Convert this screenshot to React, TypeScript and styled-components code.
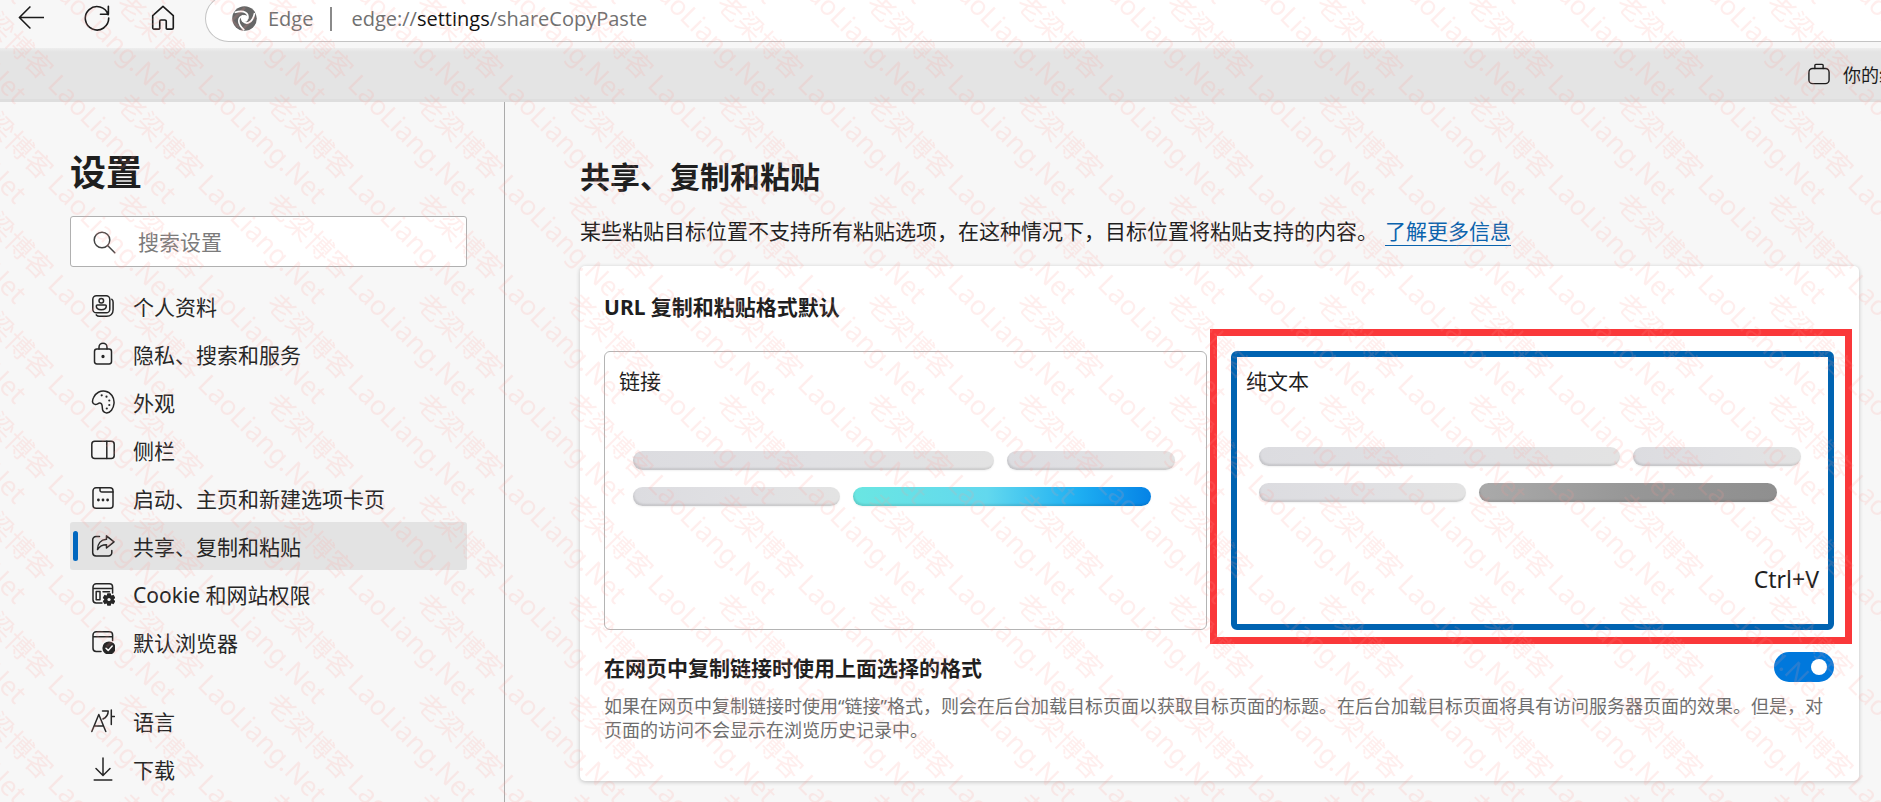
import React from "react";
import styled, { createGlobalStyle } from "styled-components";

const GlobalStyle = createGlobalStyle`
  *, *::before, *::after { box-sizing: border-box; }
  body {
    margin: 0;
    background: #f7f7f7;
    color: #1f1f1f;
    font-family: "Noto Sans", "Noto Sans CJK SC", sans-serif;
    font-size: 21px;
  }
  h1, h2, h3, p, ul { margin: 0; padding: 0; }
  ul { list-style: none; }
`;

const Page = styled.div`
  position: relative;
  min-height: 100vh;
  display: flex;
  flex-direction: column;
  overflow: hidden;
`;

const Toolbar = styled.header`
  display: flex;
  align-items: flex-start;
  height: 48px;
  padding-left: 12px;
`;

const ToolButton = styled.button`
  display: flex;
  align-items: center;
  justify-content: center;
  width: 38px;
  height: 36px;
  margin-right: 28px;
  padding: 0;
  border: 0;
  background: none;
  color: #1b1b1b;
`;

const AddressBar = styled.div`
  flex: 1;
  display: flex;
  align-items: center;
  height: 47px;
  margin-top: -5px;
  margin-left: -5px;
  padding-left: 26px;
  border: 1px solid #c4c4c4;
  border-right: 0;
  border-radius: 24px 0 0 24px;
  background: #fff;
  color: #707070;
  font-family: "Open Sans", "Noto Sans CJK SC", sans-serif;
  font-size: 20px;
`;

const SiteName = styled.span`
  margin-left: 11px;
  padding-right: 17px;
`;

const AddressDivider = styled.span`
  width: 2px;
  height: 24px;
  margin-right: 19px;
  background: #8a8a8a;
`;

const Address = styled.span`
  b { color: #111; font-weight: 400; }
`;

const Banner = styled.div`
  display: flex;
  align-items: center;
  justify-content: flex-end;
  height: 54px;
  border-bottom: 3px solid #dedede;
  background: linear-gradient(#eeeeee, #e4e4e4 4px);
  color: #1b1b1b;
`;

const BannerText = styled.span`
  width: 38px;
  margin-left: 13px;
  overflow: hidden;
  white-space: nowrap;
  font-size: 18px;
`;

const Body = styled.div`
  flex: 1;
  display: flex;
`;

const Sidebar = styled.aside`
  flex: none;
  width: 505px;
  padding: 47px 37px 0 70px;
  border-right: 1px solid #ababab;
`;

const SidebarTitle = styled.h1`
  font-size: 36px;
  line-height: 48px;
`;

const SearchBox = styled.label`
  display: flex;
  align-items: center;
  height: 51px;
  margin: 19px 0 15px;
  padding-left: 21px;
  border: 1px solid #b0b0b0;
  border-radius: 3px;
  background: #fff;
  color: #444;
`;

const SearchInput = styled.input`
  flex: 1;
  min-width: 0;
  margin-left: 22px;
  padding: 0;
  border: 0;
  outline: 0;
  background: none;
  font: inherit;
  &::placeholder { color: #7b7b7b; opacity: 1; }
`;

const NavList = styled.ul`
  margin-bottom: 31px;
`;

const NavLink = styled.a<{ $active?: boolean }>`
  position: relative;
  display: flex;
  align-items: center;
  gap: 18px;
  height: 48px;
  padding-left: 21px;
  border-radius: 3px;
  background: ${(p) => (p.$active ? "#e3e3e3" : "transparent")};
  color: #262626;
  text-decoration: none;

  &::before {
    content: "";
    position: absolute;
    left: 3px;
    top: 9px;
    display: ${(p) => (p.$active ? "block" : "none")};
    width: 5px;
    height: 30px;
    border-radius: 3px;
    background: #0067bf;
  }
`;

const Main = styled.main`
  flex: 1;
  min-width: 0;
  padding: 55px 22px 20px 75px;
`;

const PageTitle = styled.h2`
  font-size: 30px;
  line-height: 40px;
`;

const Intro = styled.p`
  margin: 20px 0 21px;
  line-height: 28px;
`;

const InfoLink = styled.a`
  margin-left: 7px;
  border-bottom: 1px solid #0b63ad;
  color: #0b63ad;
  text-decoration: none;
`;

const Card = styled.section`
  padding: 27px 25px 39px 24px;
  border-radius: 5px;
  background: #fff;
  box-shadow: 0 1px 4px rgba(0, 0, 0, 0.22);
`;

const CardTitle = styled.h3`
  font-size: 21px;
  line-height: 28px;
`;

const Options = styled.div`
  display: grid;
  grid-template-columns: 1fr 1fr;
  gap: 24px;
  margin: 30px 0 22px;
`;

const OptionSlot = styled.div`
  position: relative;
`;

const OptionCard = styled.label<{ $selected?: boolean }>`
  display: flex;
  flex-direction: column;
  height: 279px;
  padding: ${(p) => (p.$selected ? "10px 9px" : "15px 14px")};
  border: ${(p) => (p.$selected ? "6px solid #0063b1" : "1px solid #b4b4b4")};
  border-radius: 6px;
  line-height: 28px;
`;

const OptionRadio = styled.input`
  position: absolute;
  opacity: 0;
`;

const Highlight = styled.div`
  position: absolute;
  inset: -22px -18px -14px -21px;
  border: 7px solid #fa383a;
  pointer-events: none;
`;

const Preview = styled.div<{ $selected?: boolean }>`
  display: flex;
  flex-direction: column;
  gap: 17px;
  margin-top: ${(p) => (p.$selected ? "52px" : "56px")};
  padding: 0 ${(p) => (p.$selected ? "18px 0 13px" : "17px 0 14px")};
`;

const PreviewRow = styled.div<{ $end?: number }>`
  display: flex;
  gap: 13px;
  padding-right: ${(p) => p.$end ?? 0}px;
`;

const tones = {
  light: "linear-gradient(90deg, #dcdce0, #e0e0e3 50%, #e3e3e3)",
  blue: "linear-gradient(90deg, #6ae6e2, #62d8ee 45%, #1fb0f2 75%, #0583e6)",
  grey: "linear-gradient(90deg, #aaaaaa, #979797 50%, #8f8f8f)",
};

const Bar = styled.span<{ $grow: number; $tone?: keyof typeof tones }>`
  flex: ${(p) => p.$grow} 1 0;
  height: 19px;
  border-radius: 10px;
  background: ${(p) => tones[p.$tone ?? "light"]};
  box-shadow: inset 1px -2px 2px rgba(0, 0, 0, 0.1), 0 1px 2px rgba(0, 0, 0, 0.06);
`;

const Shortcut = styled.kbd`
  align-self: flex-end;
  margin-top: auto;
  margin-bottom: 21px;
  font: inherit;
  font-size: 23px;
`;

const SettingRow = styled.div`
  display: flex;
  align-items: center;
  justify-content: space-between;
  height: 30px;
`;

const SettingLabel = styled.label`
  font-weight: 700;
`;

const Switch = styled.input`
  appearance: none;
  display: flex;
  align-items: center;
  justify-content: flex-end;
  width: 60px;
  height: 30px;
  margin: 0;
  padding-right: 7px;
  border-radius: 15px;
  background: #0078dc;

  &::after {
    content: "";
    width: 16px;
    height: 16px;
    border-radius: 50%;
    background: #fff;
  }
`;

const Description = styled.p`
  margin-top: 12px;
  color: #6e6e6e;
  font-size: 18px;
  line-height: 24px;
`;

const WatermarkLayer = styled.svg`
  position: absolute;
  inset: 0;
  width: 100%;
  height: 100%;
  pointer-events: none;
  font-size: 27px;
  fill: rgba(255, 150, 140, 0.16);
`;

/* The text is longer than its tile, so each tile also draws its neighbours' overhang. */
const tileOffsets = [-300, -150, 0, 150].flatMap((x) =>
  [-300, -200, -100, 0, 100].map((y) => ({ x: x + 115, y: y + 5 }))
);

function Watermark() {
  return (
    <WatermarkLayer aria-hidden="true">
      <defs>
        <pattern id="watermark" width="150" height="100" patternUnits="userSpaceOnUse">
          {tileOffsets.map(({ x, y }) => (
            <text key={`${x},${y}`} transform={`translate(${x} ${y}) rotate(45)`}>
              老梁博客 LaoLiang.Net
            </text>
          ))}
        </pattern>
      </defs>
      <rect width="100%" height="100%" fill="url(#watermark)" />
    </WatermarkLayer>
  );
}

function Icon({ children, size = 24, stroke = 1.5 }: { children: React.ReactNode; size?: number; stroke?: number }) {
  return (
    <svg
      width={size}
      height={size}
      viewBox="0 0 24 24"
      fill="none"
      stroke="currentColor"
      strokeWidth={stroke}
      strokeLinecap="round"
      strokeLinejoin="round"
      aria-hidden="true"
    >
      {children}
    </svg>
  );
}

const gearTeeth = [0, 60, 120, 180, 240, 300];

const icons = {
  profile: (
    <>
      <rect x="1.8" y="1.8" width="17" height="17" rx="3.6" />
      <circle cx="10.3" cy="6.8" r="2.3" />
      <path d="M6.3 11h8a1 1 0 0 1 1 1c0 2.400-2 3.700-5 3.700s-5-1.300-5-3.700a1 1 0 0 1 1-1z" />
      <path d="M20.800 5.200a4 4 0 0 1 1.300 3v7.500c0 4-2.600 6.500-6.500 6.500H8.300a4 4 0 0 1-3-1.300" />
    </>
  ),
  lock: (
    <>
      <rect x="3.500" y="7" width="17" height="15" rx="2.400" />
      <path d="M8 7V5.200a4 4 0 0 1 8 0V7" />
      <circle cx="12" cy="14.500" r="0.900" fill="currentColor" />
    </>
  ),
  palette: (
    <>
      <path d="M2.600 7.500C4.600 2.800 9.600.3 14.300 1.200c5.600 1 9.300 6.300 8.700 12.300-.5 5.400-3.700 9.500-7.400 9.400-3-.1-4.300-2.500-4.300-5.300 0-2.300-.6-4.200-2.400-4.500-1.800-.2-2.700 1.600-4.600 1.400C1 14.200.9 10.800 2.600 7.500z" />
      <g fill="currentColor" stroke="none">
        <circle cx="10.700" cy="5.300" r="1.100" />
        <circle cx="15.500" cy="6.700" r="1.100" />
        <circle cx="18.300" cy="10.500" r="1.100" />
        <circle cx="18.300" cy="15" r="1.100" />
        <circle cx="15.800" cy="18.500" r="1.100" />
      </g>
    </>
  ),
  sidebar: (
    <>
      <rect x="0.800" y="3.200" width="22.400" height="17.400" rx="3" />
      <path d="M15.800 3.200v17.400" />
    </>
  ),
  tabs: (
    <>
      <rect x="2" y="1.800" width="20" height="20.400" rx="3" />
      <path d="M9 2v2.200a1.800 1.800 0 0 0 1.800 1.800H22" />
      <g fill="currentColor" stroke="none">
        <circle cx="7.400" cy="14" r="1.400" />
        <circle cx="12" cy="14" r="1.400" />
        <circle cx="16.600" cy="14" r="1.400" />
      </g>
    </>
  ),
  share: (
    <>
      <path d="M8.500 2.500H5a3.300 3.300 0 0 0-3.300 3.300v13A3.300 3.300 0 0 0 5 22h12.500a3.300 3.300 0 0 0 3.300-3.300V16.500" />
      <path d="M15.500 1.800l7.500 6-7.500 6.200v-3.300c-4.300 0-7 1.500-9 4.800C6.500 9.800 9.800 5.700 15.500 5.200z" />
    </>
  ),
  cookie: (
    <>
      <path d="M11 21H5.200A3.200 3.200 0 0 1 2 17.800V5a3.200 3.200 0 0 1 3.200-3.200h13.200A3.200 3.200 0 0 1 21.600 5v6M2 6.500h19.600" />
      <path d="M5.200 9.500H9v8.300H5.200zM12 9.800h6.500" />
      <g fill="currentColor" stroke="none">
        {gearTeeth.map((angle) => (
          <rect key={angle} x="16" y="11.200" width="4" height="4" rx="0.800" transform={`rotate(${angle} 18 17.500)`} />
        ))}
        <circle cx="18" cy="17.500" r="4.800" />
      </g>
      <circle cx="18" cy="17.500" r="1.600" fill="#f7f7f7" stroke="none" />
    </>
  ),
  browser: (
    <>
      <path d="M10 21.500H5.200A3.200 3.200 0 0 1 2 18.300V5a3.200 3.200 0 0 1 3.200-3.200h13.200A3.200 3.200 0 0 1 21.600 5v5.500M2 6.800h19.600" />
      <circle cx="18" cy="18" r="6.600" fill="currentColor" stroke="none" />
      <path d="M15 18.200l2.200 2.200 4-4.400" stroke="#f7f7f7" />
    </>
  ),
  language: <path d="M.8 22.500L7.800 5.500l7 17M3.400 17h8.800M11.500 2h5.700c0 4-2 6.500-5.200 8M20.300 1v14.500M20.300 7.500h3.200" />,
  download: <path d="M12 1v17M5 11.500l7 7 7-7M3.200 23h17.600" />,
};

const mainNav: { icon: keyof typeof icons; label: string }[] = [
  { icon: "profile", label: "个人资料" },
  { icon: "lock", label: "隐私、搜索和服务" },
  { icon: "palette", label: "外观" },
  { icon: "sidebar", label: "侧栏" },
  { icon: "tabs", label: "启动、主页和新建选项卡页" },
  { icon: "share", label: "共享、复制和粘贴" },
  { icon: "cookie", label: "Cookie 和网站权限" },
  { icon: "browser", label: "默认浏览器" },
];

const moreNav: typeof mainNav = [
  { icon: "language", label: "语言" },
  { icon: "download", label: "下载" },
];

function Nav({ items }: { items: typeof mainNav }) {
  return (
    <NavList>
      {items.map(({ icon, label }) => (
        <li key={label}>
          <NavLink href="#" $active={icon === "share"} aria-current={icon === "share" ? "page" : undefined}>
            <Icon>{icons[icon]}</Icon>
            {label}
          </NavLink>
        </li>
      ))}
    </NavList>
  );
}

function EdgeLogo() {
  return (
    <svg width="25" height="25" viewBox="0 0 24 24" aria-hidden="true">
      <circle cx="12" cy="12" r="11.800" fill="#666" />
      <circle cx="12" cy="12" r="3.400" fill="#fff" />
      {[0, 120, 240].map((angle) => (
        <path
          key={angle}
          d="M15 12.500C16.500 7 12 3.200 2.500 6.200"
          fill="none"
          stroke="#fff"
          strokeWidth="1.600"
          transform={`rotate(${angle} 12 12)`}
        />
      ))}
    </svg>
  );
}

export default function App() {
  return (
    <Page>
      <GlobalStyle />
      <Toolbar>
        <ToolButton type="button" aria-label="返回">
          <Icon size={26}><path d="M23.500 11.500H1.500M11 1.800L1.300 11.500l9.700 9.700" /></Icon>
        </ToolButton>
        <ToolButton type="button" aria-label="刷新">
          <Icon size={26}><path d="M22.300 9A10.800 10.800 0 1 0 22.800 12M22.500 1.200v7.300h-7.300" /></Icon>
        </ToolButton>
        <ToolButton type="button" aria-label="主页">
          <Icon size={26}>
            <path d="M2.500 9.800L12 1.300l9.500 8.500V21a1.300 1.300 0 0 1-1.300 1.300h-4.400A.8.8 0 0 1 15 21.500V15a1.200 1.200 0 0 0-1.200-1.200h-3.600A1.200 1.200 0 0 0 9 15v6.500a.8.800 0 0 1-.8.800H3.800A1.300 1.300 0 0 1 2.500 21z" />
          </Icon>
        </ToolButton>
        <AddressBar>
          <EdgeLogo />
          <SiteName>Edge</SiteName>
          <AddressDivider />
          <Address>edge://<b>settings</b>/shareCopyPaste</Address>
        </AddressBar>
      </Toolbar>
      <Banner>
        <Icon size={22}>
          <rect x="1" y="6" width="22" height="16.500" rx="4" />
          <path d="M7.500 6V2.500a1 1 0 0 1 1-1h7a1 1 0 0 1 1 1V6" />
        </Icon>
        <BannerText>你的组织</BannerText>
      </Banner>
      <Body>
        <Sidebar>
          <SidebarTitle>设置</SidebarTitle>
          <SearchBox>
            <Icon>
              <circle cx="10" cy="10" r="7.800" />
              <path d="M15.800 15.800l7 7" />
            </Icon>
            <SearchInput type="search" placeholder="搜索设置" aria-label="搜索设置" />
          </SearchBox>
          <nav aria-label="设置">
            <Nav items={mainNav} />
            <Nav items={moreNav} />
          </nav>
        </Sidebar>
        <Main>
          <PageTitle>共享、复制和粘贴</PageTitle>
          <Intro>
            某些粘贴目标位置不支持所有粘贴选项，在这种情况下，目标位置将粘贴支持的内容。
            <InfoLink href="#">了解更多信息</InfoLink>
          </Intro>
          <Card>
            <CardTitle>URL 复制和粘贴格式默认</CardTitle>
            <Options role="radiogroup" aria-label="URL 复制和粘贴格式默认">
              <OptionSlot>
                <OptionCard>
                  <OptionRadio type="radio" name="format" />
                  链接
                  <Preview>
                    <PreviewRow>
                      <Bar $grow={361} />
                      <Bar $grow={168} />
                    </PreviewRow>
                    <PreviewRow $end={24}>
                      <Bar $grow={207} />
                      <Bar $grow={299} $tone="blue" />
                    </PreviewRow>
                  </Preview>
                </OptionCard>
              </OptionSlot>
              <OptionSlot>
                <OptionCard $selected>
                  <OptionRadio type="radio" name="format" defaultChecked />
                  纯文本
                  <Preview $selected>
                    <PreviewRow>
                      <Bar $grow={361} />
                      <Bar $grow={168} />
                    </PreviewRow>
                    <PreviewRow $end={24}>
                      <Bar $grow={207} />
                      <Bar $grow={299} $tone="grey" />
                    </PreviewRow>
                  </Preview>
                  <Shortcut>Ctrl+V</Shortcut>
                </OptionCard>
                <Highlight />
              </OptionSlot>
            </Options>
            <SettingRow>
              <SettingLabel htmlFor="use-format">在网页中复制链接时使用上面选择的格式</SettingLabel>
              <Switch id="use-format" type="checkbox" role="switch" defaultChecked />
            </SettingRow>
            <Description>
              如果在网页中复制链接时使用“链接”格式，则会在后台加载目标页面以获取目标页面的标题。在后台加载目标页面将具有访问服务器页面的效果。但是，对页面的访问不会显示在浏览历史记录中。
            </Description>
          </Card>
        </Main>
      </Body>
      <Watermark />
    </Page>
  );
}
